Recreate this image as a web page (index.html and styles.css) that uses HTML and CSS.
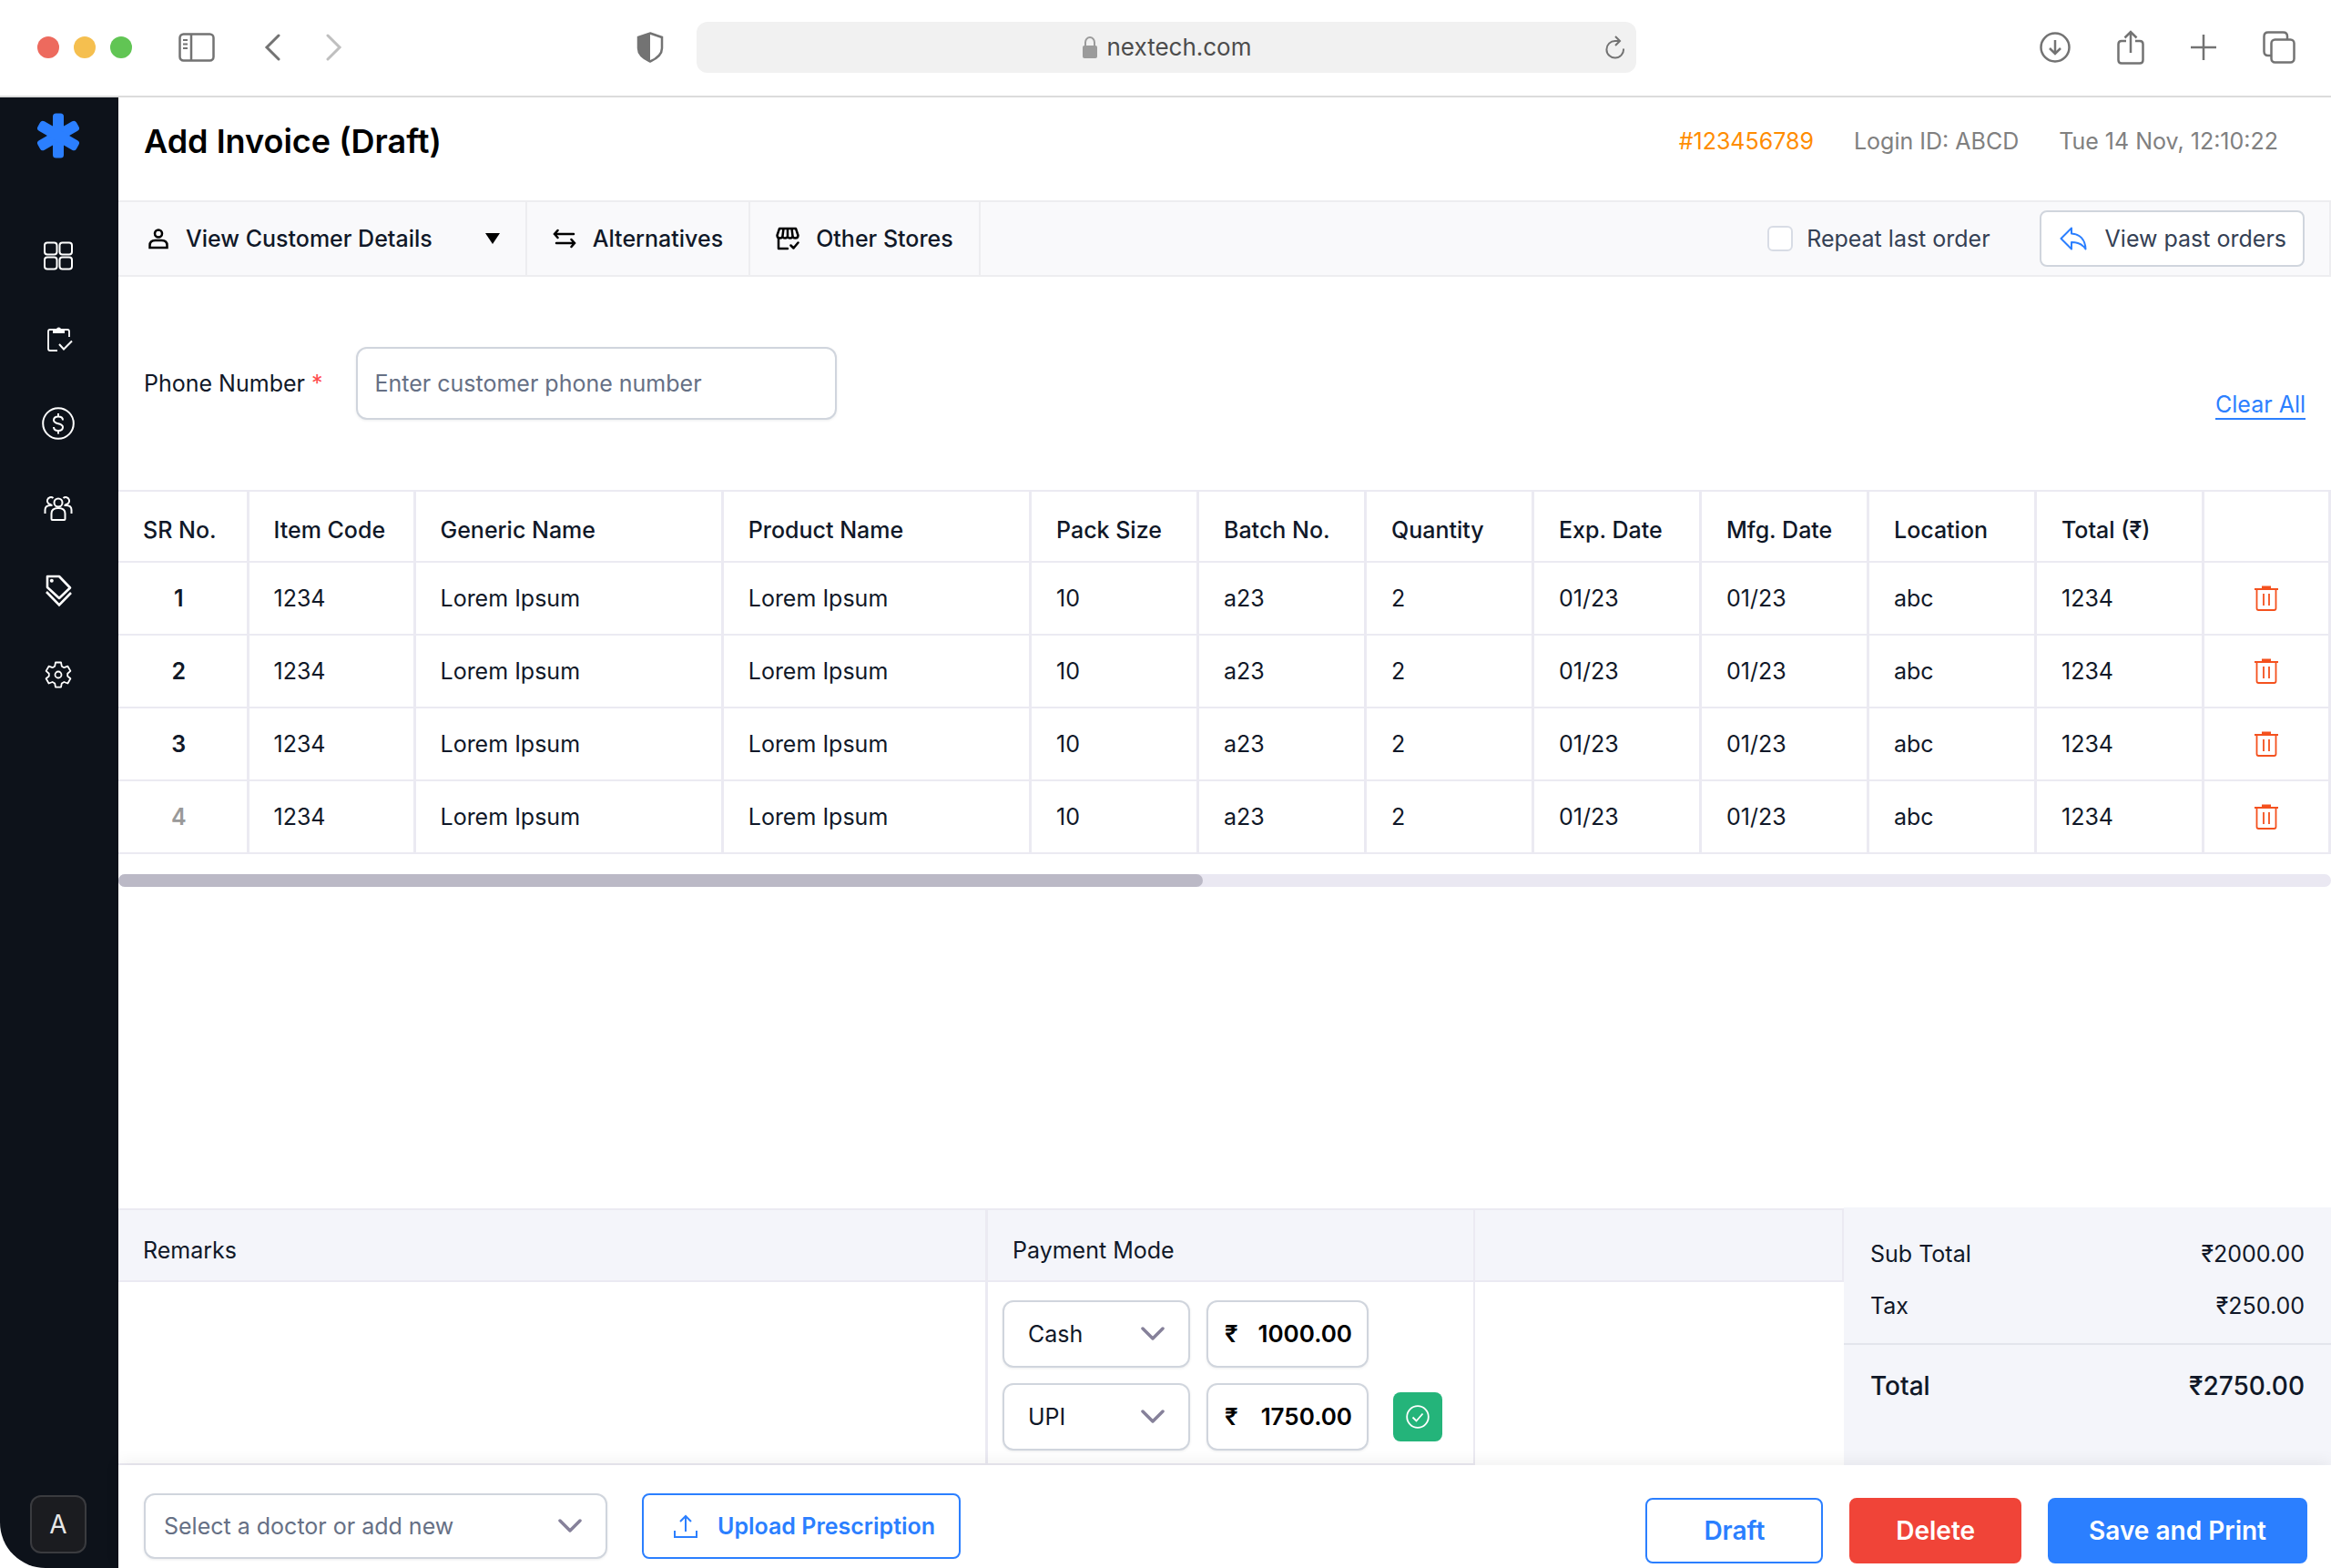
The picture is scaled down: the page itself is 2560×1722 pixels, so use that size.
FILE: index.html
```html
<!DOCTYPE html>
<html lang="en">
<head>
  <meta charset="UTF-8">
  <meta name="viewport" content="width=device-width, initial-scale=1.0">
  <title>Add Invoice (Draft)</title>
  <link rel="stylesheet" href="styles.css">
</head>
<body>
  <svg class="sprite" aria-hidden="true">
    <symbol id="trash" viewBox="0 0 26 28">
      <path d="M0 4h26" stroke-width="2"/>
      <path d="M8 2h10" stroke-width="3"/>
      <path d="M2.500 4v21q0 2 2 2h17q2 0 2-2V4M10 9v13M16 9v13" stroke-width="1.800"/>
    </symbol>
    <symbol id="chevron" viewBox="0 0 26 16">
      <path d="M2 2l11 11L24 2" stroke-width="3.500" stroke-linecap="round" stroke-linejoin="round"/>
    </symbol>
  </svg>

  <header class="browser">
    <div class="browser-left">
      <div class="lights">
        <span class="light red"></span>
        <span class="light yellow"></span>
        <span class="light green"></span>
      </div>
      <div class="nav-icons">
        <button class="icon-btn" aria-label="Sidebar">
          <svg width="40" height="32" viewBox="0 0 40 32"><rect x="1.500" y="1.500" width="37" height="29" rx="4" stroke-width="2.500"/><path d="M14 1v30" stroke-width="2.500"/><path d="M5 8h5M5 12.500h5M5 17h5" stroke-width="2"/></svg>
        </button>
        <button class="icon-btn" aria-label="Back">
          <svg width="18" height="30" viewBox="0 0 18 30"><path d="M16 2L3 15l13 13" stroke-width="3" stroke-linecap="round"/></svg>
        </button>
        <button class="icon-btn faded" aria-label="Forward">
          <svg width="18" height="30" viewBox="0 0 18 30"><path d="M2 2l13 13L2 28" stroke-width="3" stroke-linecap="round"/></svg>
        </button>
      </div>
      <svg class="shield" width="30" height="34" viewBox="0 0 30 34"><path d="M15 1.500L28 6v12c0 6-5 11-13 14.500C7 29 2 24 2 18V6z" stroke-width="2.500"/><path d="M15 1v32C7 29 2 24 2 18V6z" fill="#737373" stroke="none"/></svg>
    </div>
    <div class="address">
      <svg width="18" height="26" viewBox="0 0 18 26"><rect x="1" y="11" width="16" height="14" rx="2" fill="#9b9b9b" stroke="none"/><path d="M4 12V7.500a5 5.500 0 0 1 10 0V12" stroke="#9b9b9b" stroke-width="2"/></svg>
      <span>nextech.com</span>
      <button class="icon-btn reload" aria-label="Reload">
        <svg width="22" height="26" viewBox="0 0 22 26"><path d="M20 14.500a9.300 9.300 0 1 1-9-8.500h5M11 1l5 5-5 5" stroke-width="2"/></svg>
      </button>
    </div>
    <div class="browser-actions">
      <button class="icon-btn" aria-label="Downloads">
        <svg width="34" height="34" viewBox="0 0 34 34"><circle cx="17" cy="17" r="15.500" stroke-width="2.500"/><path d="M17 9v15M11 18l6 6 6-6" stroke-width="2.500"/></svg>
      </button>
      <button class="icon-btn" aria-label="Share">
        <svg width="30" height="38" viewBox="0 0 30 38"><path d="M10 12H5q-3.500 0-3.500 3.500V33q0 3.500 3.500 3.500h20q3.500 0 3.500-3.500V15.500Q28.500 12 25 12h-5M15 25V2M8.500 8.500L15 2l6.500 6.500" stroke-width="2.500"/></svg>
      </button>
      <button class="icon-btn" aria-label="New tab">
        <svg width="28" height="28" viewBox="0 0 28 28"><path d="M14 0v28M0 14h28" stroke-width="2.500"/></svg>
      </button>
      <button class="icon-btn" aria-label="Tabs">
        <svg width="36" height="36" viewBox="0 0 36 36"><rect x="9.500" y="9.500" width="25" height="25" rx="4" stroke-width="2.500"/><path d="M9.500 27H6q-4.500 0-4.500-4.500V6Q1.500 1.500 6 1.500h16.500Q27 1.500 27 6v3.500" stroke-width="2.500"/></svg>
      </button>
    </div>
  </header>

  <div class="app">
    <aside class="sidebar">
      <svg class="logo" width="50" height="50" viewBox="0 0 50 50"><rect id="arm" x="19" y="0.500" width="12" height="49" rx="3.500"/><use href="#arm" transform="rotate(60 25 25)"/><use href="#arm" transform="rotate(120 25 25)"/></svg>
      <nav class="menu">
        <a href="#" aria-label="Dashboard"><svg width="40" height="40" viewBox="0 0 40 40" stroke-width="2"><rect x="5" y="5.500" width="13.500" height="13" rx="3"/><rect x="21.500" y="5.500" width="13.500" height="13" rx="3"/><rect x="5" y="21.500" width="13.500" height="13" rx="3"/><rect x="21.500" y="21.500" width="13.500" height="13" rx="3"/></svg></a>
        <a href="#" aria-label="Orders"><svg width="40" height="40" viewBox="0 0 40 40" stroke-width="1.800"><path d="M19 32h-8q-2 0-2-2V11q0-2 2-2h19q2 0 2 2v6"/><path d="M14 9h4q0-2.500 2.500-2.500T23 9h4v4H14z" fill="#fff" stroke="none"/><path d="M21 25l5 5.500 9-9" stroke-width="2"/></svg></a>
        <a href="#" aria-label="Billing"><svg width="40" height="40" viewBox="0 0 40 40" stroke-width="2"><circle cx="20" cy="20" r="16.800"/><path d="M25 16.500c0-2.500-2-4-5-4s-5 1.500-5 4c0 5 10 2.500 10 7.500 0 2.500-2 4-5 4s-5-1.500-5-4M20 9v3.500M20 28v3.500"/></svg></a>
        <a href="#" aria-label="Customers"><svg width="40" height="40" viewBox="0 0 40 40" stroke-width="2"><circle cx="20" cy="15" r="4.500"/><path d="M12.500 33v-6q0-6 7.500-6t7.500 6v6q0 1-1 1h-13q-1 0-1-1zM14.500 10a4 4 0 1 0-2 7M25.500 10a4 4 0 1 1 2 7M5.500 27v-4q0-5 6-5h2M34.500 27v-4q0-5-6-5h-2"/></svg></a>
        <a href="#" aria-label="Invoices"><svg width="40" height="40" viewBox="0 0 40 40" stroke-width="2.600"><path d="M8 4h13l12 12.500L21 28 8 16z" stroke-linejoin="round"/><path d="M7 21l14 14.500L34 22"/><circle cx="12.800" cy="8.800" r="2" fill="#fff" stroke="none"/></svg></a>
        <a href="#" aria-label="Settings"><svg width="40" height="40" viewBox="0 0 40 40" stroke-width="1.800"><circle cx="20" cy="20" r="3.500"/><path stroke-linejoin="round" d="M17 6.500h6l.8 4.200 2.600 1.500 4-1.500 3 5.200-3.200 2.800v2.800l3.200 2.800-3 5.200-4-1.500-2.600 1.500-.8 4.200h-6l-.8-4.200-2.600-1.500-4 1.500-3-5.200 3.200-2.800v-2.800l-3.200-2.800 3-5.200 4 1.500 2.600-1.500z"/></svg></a>
      </nav>
      <button class="avatar">A</button>
    </aside>

    <main class="content">
      <div class="page-head">
        <h1>Add Invoice (Draft)</h1>
        <div class="page-info">
          <span class="invoice-no">#123456789</span>
          <span>Login ID: ABCD</span>
          <span>Tue 14 Nov, 12:10:22</span>
        </div>
      </div>

      <div class="toolbar">
        <button class="tool customer">
          <svg width="24" height="24" viewBox="0 0 24 24" stroke-width="2.500"><circle cx="12" cy="6.500" r="4"/><path d="M2.500 22v-2.500q0-5.500 6-5.500h7q6 0 6 5.500V22z"/></svg>
          <span>View Customer Details</span>
          <svg class="caret" width="16" height="12" viewBox="0 0 16 12"><path d="M0 0h16L8 12z" fill="#000" stroke="none"/></svg>
        </button>
        <button class="tool">
          <svg width="26" height="24" viewBox="0 0 26 24" stroke-width="2.500" stroke-linecap="round"><path d="M23 7H2M5.500 3L2 7l3.500 4M4 17h20M20.500 13l3.500 4-3.500 4"/></svg>
          <span>Alternatives</span>
        </button>
        <button class="tool">
          <svg width="26" height="26" viewBox="0 0 26 26" stroke-width="2.500" stroke-linecap="round" stroke-linejoin="round"><path d="M4 2h18l2.500 7.500q0 3-3 3t-3-2.500q0 2.500-2.800 2.500T13 10q0 2.500-2.800 2.500T7.500 10q0 2.500-3 2.500t-3-3zM8.500 2l-1 8M13 2v8M17.500 2l1 8M3 13v11h10M16.500 20.500l3 3 5-6"/></svg>
          <span>Other Stores</span>
        </button>
        <div class="toolbar-right">
          <label class="repeat"><input type="checkbox">Repeat last order</label>
          <button class="past-orders">
            <svg width="30" height="26" viewBox="0 0 30 26" stroke-width="2" stroke-linejoin="round"><path d="M13 1.500L1.500 13 13 24.500V17c7 0 12 2 15.500 7.500C28 14 22 8 13 7.500z"/></svg>
            <span>View past orders</span>
          </button>
        </div>
      </div>

      <div class="phone-row">
        <label for="phone">Phone Number <span class="required">*</span></label>
        <input class="field phone" type="tel" id="phone" placeholder="Enter customer phone number">
        <a class="clear-all" href="#">Clear All</a>
      </div>

      <table class="items">
        <colgroup>
          <col class="c-sr"><col class="c-code"><col><col>
          <col class="c-std"><col class="c-std"><col class="c-std"><col class="c-std"><col class="c-std"><col class="c-std"><col class="c-std">
          <col class="c-del">
        </colgroup>
        <thead>
          <tr>
            <th>SR No.</th><th>Item Code</th><th>Generic Name</th><th>Product Name</th><th>Pack Size</th><th>Batch No.</th><th>Quantity</th><th>Exp. Date</th><th>Mfg. Date</th><th>Location</th><th>Total (₹)</th><th></th>
          </tr>
        </thead>
        <tbody>
          <tr>
            <td class="sr">1</td><td>1234</td><td>Lorem Ipsum</td><td>Lorem Ipsum</td><td>10</td><td>a23</td><td>2</td><td>01/23</td><td>01/23</td><td>abc</td><td>1234</td>
            <td class="del"><button aria-label="Delete row 1"><svg width="26" height="28"><use href="#trash"/></svg></button></td>
          </tr>
          <tr>
            <td class="sr">2</td><td>1234</td><td>Lorem Ipsum</td><td>Lorem Ipsum</td><td>10</td><td>a23</td><td>2</td><td>01/23</td><td>01/23</td><td>abc</td><td>1234</td>
            <td class="del"><button aria-label="Delete row 2"><svg width="26" height="28"><use href="#trash"/></svg></button></td>
          </tr>
          <tr>
            <td class="sr">3</td><td>1234</td><td>Lorem Ipsum</td><td>Lorem Ipsum</td><td>10</td><td>a23</td><td>2</td><td>01/23</td><td>01/23</td><td>abc</td><td>1234</td>
            <td class="del"><button aria-label="Delete row 3"><svg width="26" height="28"><use href="#trash"/></svg></button></td>
          </tr>
          <tr>
            <td class="sr new">4</td><td>1234</td><td>Lorem Ipsum</td><td>Lorem Ipsum</td><td>10</td><td>a23</td><td>2</td><td>01/23</td><td>01/23</td><td>abc</td><td>1234</td>
            <td class="del"><button aria-label="Delete row 4"><svg width="26" height="28"><use href="#trash"/></svg></button></td>
          </tr>
        </tbody>
      </table>
      <div class="scrollbar"><div class="thumb"></div></div>

      <section class="summary">
        <div class="panel remarks">
          <h2>Remarks</h2>
        </div>
        <div class="panel payment">
          <h2>Payment Mode</h2>
          <div class="payments">
            <div class="pay-row">
              <div class="select-wrap mode">
                <select class="field" aria-label="Payment mode 1"><option>Cash</option><option>UPI</option></select>
                <svg class="chevron" width="26" height="16"><use href="#chevron"/></svg>
              </div>
              <label class="field amount">₹<input type="text" value="1000.00"></label>
            </div>
            <div class="pay-row">
              <div class="select-wrap mode">
                <select class="field" aria-label="Payment mode 2"><option>UPI</option><option>Cash</option></select>
                <svg class="chevron" width="26" height="16"><use href="#chevron"/></svg>
              </div>
              <label class="field amount">₹<input type="text" value="1750.00"></label>
              <button class="confirm" aria-label="Confirm payment">
                <svg width="26" height="26" viewBox="0 0 26 26" stroke-width="1.800"><circle cx="13" cy="13" r="11.800"/><path d="M7.500 13.500l4 4 7-8"/></svg>
              </button>
            </div>
          </div>
        </div>
        <div class="panel blank">
          <h2></h2>
        </div>
        <dl class="totals">
          <div><dt>Sub Total</dt><dd>₹2000.00</dd></div>
          <div><dt>Tax</dt><dd>₹250.00</dd></div>
          <div class="grand"><dt>Total</dt><dd>₹2750.00</dd></div>
        </dl>
      </section>

      <footer class="actions">
        <div class="actions-left">
          <div class="select-wrap doctor">
            <select class="field" aria-label="Doctor"><option>Select a doctor or add new</option></select>
            <svg class="chevron" width="26" height="16"><use href="#chevron"/></svg>
          </div>
          <button class="btn upload">
            <svg width="26" height="26" viewBox="0 0 26 26" stroke-width="2"><path d="M13 19V2M7 8l6-6 6 6M1 18v7h24v-7"/></svg>
            Upload Prescription
          </button>
        </div>
        <div class="actions-right">
          <button class="btn draft">Draft</button>
          <button class="btn delete">Delete</button>
          <button class="btn save">Save and Print</button>
        </div>
      </footer>
    </main>
  </div>
</body>
</html>
```
FILE: styles.css
```css
* {
  box-sizing: border-box;
}

body {
  margin: 0;
  min-height: 100vh;
  display: flex;
  flex-direction: column;
  background: #fff;
  color: #101828;
  font-family: Inter, "Liberation Sans", sans-serif;
  font-size: 25px;
  line-height: 32px;
}

button,
input,
select {
  font: inherit;
  color: inherit;
}

button {
  padding: 0;
  border: none;
  background: none;
  cursor: pointer;
}

svg {
  display: block;
  flex: none;
  fill: none;
  stroke: currentColor;
}

.sprite {
  position: absolute;
  width: 0;
  height: 0;
}

/* browser bar */
.browser {
  display: grid;
  grid-template-columns: 1fr minmax(0, 1032px) 1fr;
  align-items: center;
  column-gap: 36px;
  height: 107px;
  padding: 0 39px 1px 41px;
  border-bottom: 2px solid #dcdcdc;
  color: #737373;
}

.browser-left {
  display: flex;
  align-items: center;
}

.lights {
  display: flex;
  gap: 16px;
}

.light {
  width: 24px;
  height: 24px;
  border-radius: 50%;
}

.red { background: #ed6a5e; }
.yellow { background: #f5bf4f; }
.green { background: #61c554; }

.nav-icons {
  display: flex;
  align-items: center;
  gap: 50px;
  margin-left: 51px;
}

.nav-icons .icon-btn:first-child {
  margin-right: 4px;
}

.faded {
  color: #bfbfbf;
}

.shield {
  margin-left: auto;
}

.address {
  display: flex;
  align-items: center;
  justify-content: center;
  gap: 10px;
  position: relative;
  height: 56px;
  border-radius: 12px;
  background: #f1f1f1;
  color: #4c4c4c;
  font-size: 26px;
}

.reload {
  position: absolute;
  right: 12px;
  color: #737373;
}

.browser-actions {
  display: flex;
  align-items: center;
  justify-content: flex-end;
  gap: 51px;
}

/* sidebar */
.app {
  flex: 1;
  display: flex;
}

.sidebar {
  width: 130px;
  display: flex;
  flex-direction: column;
  align-items: center;
  padding: 17px 2px 16px 0;
  border-bottom-left-radius: 50px;
  background: #0d121a;
  color: #fff;
}

.logo {
  color: #2b7fff;
  fill: currentColor;
  stroke: none;
}

.menu {
  display: flex;
  flex-direction: column;
  gap: 52px;
  margin-top: 87px;
}

.menu a {
  color: #fff;
}

.avatar {
  width: 62px;
  height: 64px;
  margin-top: auto;
  border: 2px solid #3a3b3f;
  border-radius: 12px;
  background: #1b1c20;
  color: #e8e8e8;
  font-size: 28px;
}

/* page */
.content {
  flex: 1;
  min-width: 0;
  display: flex;
  flex-direction: column;
}

.page-head {
  display: flex;
  align-items: center;
  justify-content: space-between;
  height: 113px;
  padding: 0 58px 18px 28px;
}

h1 {
  margin: 0;
  color: #000;
  font-size: 36px;
  font-weight: 600;
  line-height: 44px;
}

.page-info {
  display: flex;
  gap: 44px;
  color: #808080;
}

.invoice-no {
  color: #ff8c00;
}

.toolbar {
  display: flex;
  height: 84px;
  border: 2px solid #ededf0;
  border-left: none;
  background: #f9f9fb;
}

.tool {
  display: flex;
  align-items: center;
  gap: 18px;
  padding: 0 28px;
  border-right: 2px solid #ededf0;
  font-weight: 500;
}

.tool svg {
  color: #000;
}

.customer {
  padding-left: 32px;
}

.tool .caret {
  margin-left: 40px;
}

.toolbar-right {
  display: flex;
  align-items: center;
  gap: 54px;
  margin-left: auto;
  padding-right: 27px;
  color: #344054;
}

.repeat {
  display: flex;
  align-items: center;
  gap: 15px;
}

.repeat input {
  appearance: none;
  width: 28px;
  height: 28px;
  margin: 0;
  border: 2px solid #d8dce5;
  border-radius: 6px;
  background: #fff;
}

.past-orders {
  display: flex;
  align-items: center;
  gap: 20px;
  height: 62px;
  padding: 0 18px 0 20px;
  border: 2px solid #d0d5dd;
  border-radius: 8px;
  background: #fff;
}

.past-orders svg {
  color: #2b7fff;
}

.phone-row {
  display: flex;
  align-items: center;
  padding: 77px 28px;
}

.required {
  color: #ff4d4f;
}

.field {
  border: 2px solid #d0d5dd;
  border-radius: 12px;
  background: #fff;
  box-shadow: 0 1px 3px rgba(16, 24, 40, 0.08);
}

.phone {
  width: 528px;
  height: 80px;
  margin-left: 36px;
  padding: 0 19px;
}

.phone::placeholder {
  color: #667085;
}

.clear-all {
  align-self: flex-end;
  margin-left: auto;
  border-bottom: 2px solid #2b7fff;
  color: #2b7fff;
  line-height: 30px;
  text-decoration: none;
}

/* items table */
.items {
  width: 100%;
  table-layout: fixed;
  border-collapse: collapse;
}

.c-sr { width: 142px; }
.c-code { width: 183px; }
.c-std { width: 184px; }
.c-del { width: 139px; }

.items th,
.items td {
  height: 80px;
  padding: 0 0 0 27px;
  border: 2px solid #ebeaf2;
  border-width: 2px 3px;
  text-align: left;
  font-weight: 400;
}

.items th:first-child,
.items td:first-child {
  border-left: none;
}

.items th {
  height: 78px;
  padding-top: 8px;
  font-weight: 500;
}

.items .sr {
  padding: 0 8px 0 0;
  text-align: center;
  font-weight: 600;
}

.items .new {
  color: #999;
}

.items .del {
  padding: 0;
}

.del button {
  display: block;
  margin: 0 auto;
  color: #f4511e;
}

.scrollbar {
  height: 14px;
  margin-top: 22px;
  border-radius: 7px;
  background: #eae8f2;
}

.thumb {
  width: 49%;
  height: 14px;
  border-radius: 7px;
  background: #bbb9c6;
}

/* remarks, payment, totals */
.summary {
  display: flex;
  margin-top: auto;
  height: 283px;
}

.panel {
  margin-top: 1px;
  border-right: 2px solid #ebeaf2;
  border-bottom: 2px solid #ebeaf2;
}

.panel h2 {
  height: 81px;
  margin: 0;
  padding: 28px 27px 0;
  border-top: 2px solid #ebeaf2;
  border-bottom: 2px solid #ebeaf2;
  background: #f4f5fa;
  font-size: 25px;
  font-weight: 400;
}

.remarks {
  flex: 1;
  border-right-width: 3px;
}

.payment {
  width: 535px;
}

.blank {
  width: 405px;
  border: none;
}

.blank h2 {
  border-right: 2px solid #ebeaf2;
}

.payments {
  display: flex;
  flex-direction: column;
  gap: 17px;
  padding: 20px 16px 0;
}

.pay-row {
  display: flex;
  align-items: center;
  gap: 18px;
}

.select-wrap {
  position: relative;
}

.select-wrap select {
  display: block;
  appearance: none;
  width: 100%;
  height: 74px;
  padding: 0 26px;
}

.chevron {
  position: absolute;
  top: 50%;
  right: 28px;
  margin-top: -8px;
  color: #86819a;
  pointer-events: none;
}

.mode {
  width: 206px;
}

.amount {
  display: flex;
  align-items: center;
  justify-content: space-between;
  width: 178px;
  height: 74px;
  padding: 0 16px 0 18px;
  color: #000;
  font-size: 26px;
  font-weight: 600;
}

.amount input {
  width: 116px;
  padding: 0;
  border: none;
  outline: none;
  background: none;
  text-align: right;
}

.confirm {
  display: flex;
  align-items: center;
  justify-content: center;
  width: 54px;
  height: 54px;
  margin-left: 9px;
  border-radius: 8px;
  background: #24b47a;
  color: #fff;
}

.totals {
  width: 535px;
  margin: 0;
  padding-top: 35px;
  background: #f4f5fa;
}

.totals div {
  display: flex;
  justify-content: space-between;
  padding: 0 29px 25px;
}

.totals dd {
  margin: 0;
}

.totals .grand {
  padding-top: 27px;
  border-top: 2px solid #e3e5ec;
  font-size: 28px;
  font-weight: 500;
  line-height: 36px;
}

/* footer */
.actions {
  display: flex;
  justify-content: space-between;
  height: 113px;
  padding: 31px 26px 0 28px;
  background: #fff;
  box-shadow: 0 -4px 16px rgba(0, 0, 0, 0.06);
}

.actions-left {
  display: flex;
  align-items: flex-start;
  gap: 38px;
}

.actions-right {
  display: flex;
  align-items: flex-start;
  gap: 29px;
  padding-top: 5px;
}

.doctor {
  width: 509px;
}

.doctor select {
  height: 72px;
  padding: 0 20px;
  color: #667085;
}

.btn {
  display: flex;
  align-items: center;
  justify-content: center;
  height: 72px;
  padding: 0 43px;
  border: 2px solid #2b7fff;
  border-radius: 8px;
  font-size: 28px;
  font-weight: 600;
}

.upload {
  gap: 22px;
  padding: 0 26px 0 33px;
  color: #2b7fff;
  font-size: 25px;
}

.draft {
  padding: 0 62px;
  color: #2b7fff;
}

.delete {
  padding: 0 49px;
  border-color: #f04438;
  background: #f04438;
  color: #fff;
}

.save {
  background: #2b7fff;
  color: #fff;
}
```
